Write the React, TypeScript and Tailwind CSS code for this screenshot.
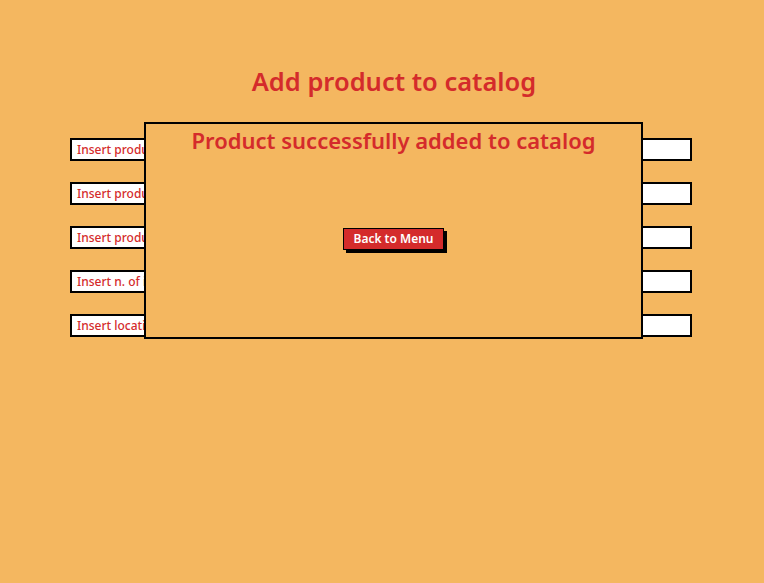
import React from "react"

const fields = [
  "Insert product name",
  "Insert product description",
  "Insert product price",
  "Insert n. of items",
  "Insert location",
]

export default function App() {
  return (
    <div
      className="relative w-[764px] h-[583px] bg-[#f4b760] overflow-hidden"
      style={{ fontFamily: "'Noto Sans', Lato, sans-serif" }}
    >
      <h1 className="pt-[63px] pl-[24px] text-center text-[25.5px] font-semibold leading-[36px] text-[#d42b2b]">
        Add product to catalog
      </h1>

      <div className="mt-[39px] ml-[70px] flex w-[622px] flex-col gap-[21px]">
        {fields.map((f) => (
          <div
            key={f}
            className="h-[23px] border-2 border-black bg-white pl-[5px] text-[12px] font-medium leading-[19px] text-[#d42b2b]"
          >
            {f}
          </div>
        ))}
      </div>

      {/* dialog */}
      <div className="absolute left-[144px] top-[122px] flex h-[217px] w-[499px] flex-col items-center border-2 border-black bg-[#f4b760]">
        <div className="mt-[1px] text-[22px] font-semibold leading-[30px] text-[#d42b2b]">
          Product successfully added to catalog
        </div>
        <button className="mt-[73px] h-[22px] w-[101px] border border-black bg-[#d42b2b] text-[12px] font-semibold leading-[20px] text-white shadow-[3px_3px_0_#000]">
          Back to Menu
        </button>
      </div>
    </div>
  )
}
